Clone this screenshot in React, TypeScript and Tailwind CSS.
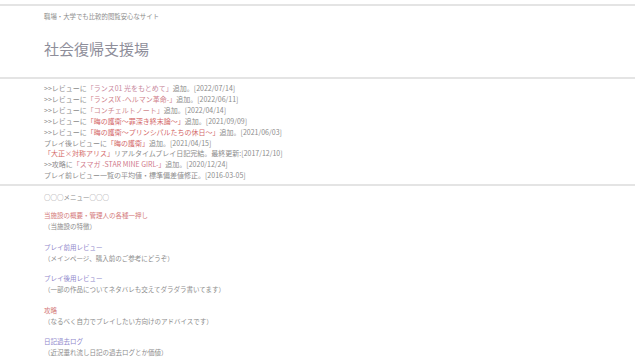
const font = {
  fontFamily: '"Noto Sans CJK JP", "Noto Sans", sans-serif',
};

type Part = { t: string; link?: string };

const news: Part[][] = [
  [{ t: ">>レビューに" }, { t: "「ランス01 光をもとめて」", link: "text-[#c98aa0]" }, { t: "追加。[2022/07/14]" }],
  [{ t: ">>レビューに" }, { t: "「ランスIX -ヘルマン革命-」", link: "text-[#d07f8c]" }, { t: "追加。[2022/06/11]" }],
  [{ t: ">>レビューに" }, { t: "「コンチェルトノート」", link: "text-[#cf8a90]" }, { t: "追加。[2022/04/14]" }],
  [{ t: ">>レビューに" }, { t: "「晦の護衛～罪深き終末論～」", link: "text-[#d46a6a]" }, { t: "追加。[2021/09/09]" }],
  [{ t: ">>レビューに" }, { t: "「晦の護衛～プリンシパルたちの休日～」", link: "text-[#d46a6a]" }, { t: "追加。[2021/06/03]" }],
  [{ t: "プレイ後レビューに" }, { t: "「晦の護衛」", link: "text-[#d46a6a]" }, { t: "追加。[2021/04/15]" }],
  [{ t: "「大正×対称アリス」", link: "text-[#d46a6a]" }, { t: "リアルタイムプレイ日記完結。最終更新:[2017/12/10]" }],
  [{ t: ">>攻略に" }, { t: "「スマガ -STAR MINE GIRL-」", link: "text-[#d07a8a]" }, { t: "追加。[2020/12/24]" }],
  [{ t: "プレイ前レビュー一覧の平均値・標準偏差値修正。[2016-03-05]" }],
];

const menu = [
  { title: "当施設の概要・管理人の各種一押し", color: "text-[#d47a7a]", desc: "（当施設の特徴）" },
  { title: "プレイ前用レビュー", color: "text-[#9088cc]", desc: "（メインページ、購入前のご参考にどうぞ）" },
  { title: "プレイ後用レビュー", color: "text-[#9088cc]", desc: "（一部の作品についてネタバレも交えてダラダラ書いてます）" },
  { title: "攻略", color: "text-[#d47a7a]", desc: "（なるべく自力でプレイしたい方向けのアドバイスです）" },
  { title: "日記過去ログ", color: "text-[#9088cc]", desc: "（近況垂れ流し日記の過去ログとか価値）" },
];

export default function App() {
  return (
    <div className="w-[640px] h-[360px] overflow-hidden bg-white text-[#8c8c8c]" style={font}>
      <div className="w-[635px] mt-[4px] border-t-2 border-[#e4e4e4]">
        {/* header */}
        <div className="pl-[44px] pt-[6px] pb-[18px] border-b-2 border-[#e4e4e4]">
          <div className="text-[6.4px] leading-[10px]">職場・大学でも比較的閲覧安心なサイト</div>
          <h1 className="mt-[17px] text-[15px] leading-[20px] text-[#8e8e9a]">社会復帰支援場</h1>
        </div>

        {/* news */}
        <div className="pl-[44px] pt-[4px] pb-[3px] border-b-2 border-[#e4e4e4]">
          {news.map((row, i) => (
            <div key={i} className="text-[7px] leading-[10.9px] whitespace-nowrap">
              {row.map((p, j) => (
                <span key={j} className={p.link ?? ""}>
                  {p.t}
                </span>
              ))}
            </div>
          ))}
        </div>

        {/* menu */}
        <div className="pl-[44px] pt-[6px] text-[6.5px] leading-[11px]">
          <div>○○○メニュー○○○</div>
          <div className="mt-[7px] flex flex-col gap-[9.5px]">
            {menu.map((m) => (
              <div key={m.title}>
                <div className={m.color}>{m.title}</div>
                <div>{m.desc}</div>
              </div>
            ))}
          </div>
        </div>
      </div>
    </div>
  );
}
